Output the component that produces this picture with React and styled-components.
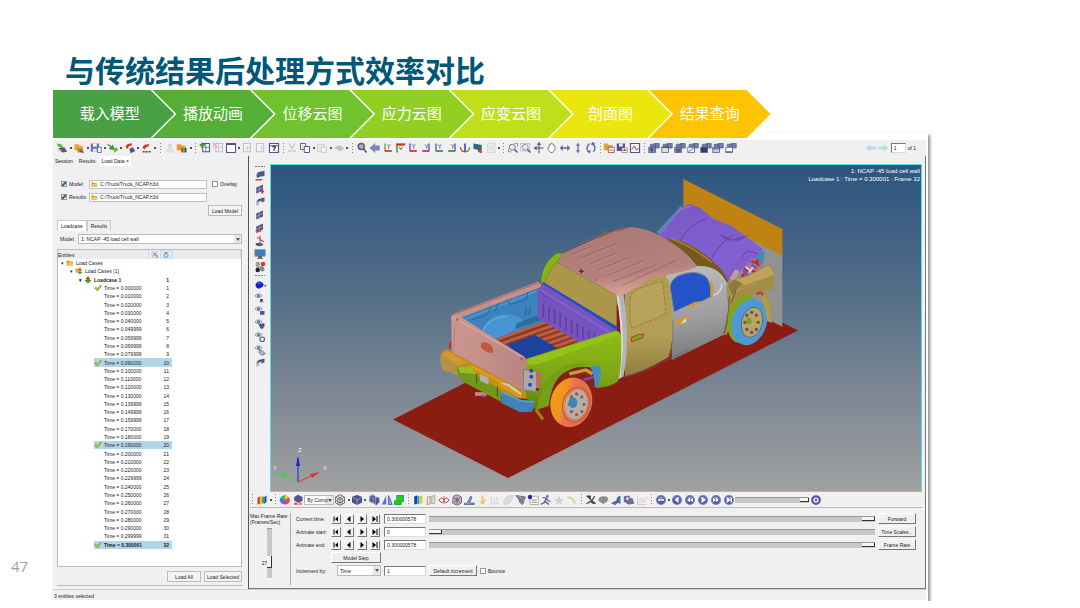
import styled, { createGlobalStyle } from 'styled-components';

const GlobalStyle = createGlobalStyle`
    *{
        box-sizing: border-box;
    }

    body{
        margin: 0;
        background: #fff;
        color: #222;
        font-family: "Liberation Sans", Arial, sans-serif;
    }

    button, input, select{
        margin: 0;
        padding: 0;
        font: inherit;
        color: inherit;
    }
`

// Slide
const Slide = styled.main`
    display: grid;
    grid-template-columns: 53px minmax(0, 1fr) 152px;
    padding-top: 50px;
`

const PageNumber = styled.span`
    align-self: end;
    padding: 0 0 25px 11px;
    font: 15px/20px "Open Sans", "Noto Sans", sans-serif;
    color: #a2a2a2;
`

const Title = styled.h1`
    margin: 0;
    padding: 0 0 2px 12px;
    font: 700 30px/38px "Noto Sans CJK SC", sans-serif;
    color: #005878;
    white-space: nowrap;
`

const Steps = styled.ol`
    position: relative;
    z-index: 1;
    display: flex;
    width: 82%;
    margin: 0;
    padding: 0 22px 0 0;
    list-style: none;
`

const Step = styled.li`
    flex: 1 1 120px;
    height: 48px;
    margin-right: -22px;
    padding: 0 ${({ $first }) => $first ? '8px' : '0'} 2px 0;
    display: flex;
    align-items: center;
    justify-content: center;
    background: ${({ $color }) => $color};
    clip-path: ${({ $first }) => $first
        ? 'polygon(0 0, calc(100% - 24px) 0, 100% 50%, calc(100% - 24px) 100%, 0 100%)'
        : 'polygon(0 0, calc(100% - 24px) 0, 100% 50%, calc(100% - 24px) 100%, 0 100%, 24px 50%)'};
    color: #fff;
    font: 15px/20px "Noto Sans CJK SC", sans-serif;
`

// Application window
const Window = styled.section`
    margin-top: -5px;
    border: solid #fff;
    border-width: 7px 2px 1px 0;
    background: #f0f0f0;
    box-shadow: 2px 2px 3px rgba(0, 0, 0, .45);
    font-size: 5px;
    line-height: 8px;
`

const TopBar = styled.header`
    display: flex;
    align-items: center;
    justify-content: space-between;
    height: 16px;
    padding: 0 10px 0 3px;
`

const Tools = styled.div`
    display: flex;
    align-items: center;
    flex: 0 1 ${({ $width }) => $width};
    min-width: 0;
`

const ToolButton = styled.button`
    display: flex;
    align-items: center;
    justify-content: center;
    flex: 0 1 13px;
    min-width: 0;
    height: 13px;
    border: 0;
    background: none;
    opacity: ${({ $faded }) => $faded ? .3 : 1};

    & svg{
        flex: none;
        width: 12px;
        height: 12px;
    }
`

const Caret = styled.i`
    flex: 0 1 4px;
    height: 2px;
    border: solid transparent;
    border-width: 0 1px;
    background: #555;
    background-clip: padding-box;
`

const Grip = styled.i`
    flex: 0 1 6px;
    height: 11px;
    background: repeating-linear-gradient(#888 0 1px, transparent 1px 3px) center / 1px 100% no-repeat;
`

const PageBox = styled.div`
    display: flex;
    align-items: center;

    & label{
        display: flex;
        align-items: center;
        gap: 2px;
        padding-left: 1px;
    }
`

const Body = styled.div`
    display: flex;
    border-right: 1px solid #777;
`

// Left panel
const Side = styled.aside`
    flex: 0 0 195px;
    display: flex;
    flex-direction: column;
`

const Tabs = styled.div`
    display: flex;
    height: ${({ $height }) => $height};
    padding-left: ${({ $inset }) => $inset};
    gap: ${({ $gap }) => $gap || '0'};
`

const Tab = styled.button`
    padding: 0 ${({ $boxed }) => $boxed ? '3px' : '2px'};
    border: ${({ $boxed }) => $boxed ? '1px solid #c8ccd0' : '0'};
    border-bottom: 0;
    background: ${({ $active }) => $active ? '#fff' : 'transparent'};
    white-space: nowrap;
    line-height: 8px;
`

const Form = styled.div`
    display: grid;
    grid-template-columns: 28px 118px 1fr;
    align-items: center;
    row-gap: 3px;
    padding: 13px 6px 4px 8px;
`

const CheckLabel = styled.label`
    display: flex;
    align-items: center;
    gap: 2px;
    height: 10px;
    padding-left: ${({ $inset }) => $inset || '0'};
`

const Check = styled.input`
    appearance: none;
    width: 6px;
    height: 6px;
    border: 1px solid #8a9aa8;
    background: #fff;

    &:checked{
        background: linear-gradient(135deg, #d6ecf8 30%, #2d6e9c 30% 70%, #d6ecf8 70%);
    }
`

const FileField = styled.div`
    display: flex;
    align-items: center;
    gap: 2px;
    height: 9px;
    padding-left: 1px;
    border: 1px solid #b9c2cb;
    background: #fff;

    & svg{
        flex: none;
        width: 7px;
        height: 7px;
    }
`

const TextInput = styled.input`
    flex: 1;
    min-width: 0;
    width: ${({ $width }) => $width || '100%'};
    height: ${({ $bare }) => $bare ? '7px' : '10px'};
    padding-left: ${({ $bare }) => $bare ? '0' : '2px'};
    border: ${({ $bare }) => $bare ? '0' : '1px solid'};
    border-color: #777 #ddd #ddd #777;
    background: #fff;
    outline: 0;
`

const FormButton = styled.button`
    height: 11px;
    padding: 0 2px;
    border: 1px solid #b5bec7;
    background: #f3f4f5;
    white-space: nowrap;
    line-height: 8px;
    min-width: 34px;
`

const RightCell = styled.div`
    grid-column: 1 / -1;
    display: flex;
    justify-content: flex-end;
`

const SelectRow = styled.label`
    display: flex;
    align-items: center;
    gap: 3px;
    padding: 3px 6px 5px 7px;
`

const SelectBox = styled.span`
    position: relative;
    display: flex;
    flex: 1;
    height: ${({ $tall }) => $tall ? '11px' : '10px'};
    margin-left: ${({ $inset }) => $inset || '0'};

    &::after{
        content: "";
        position: absolute;
        right: 2px;
        top: 4px;
        border: solid transparent;
        border-width: 3px 2px 0;
        border-top-color: #555;
        pointer-events: none;
    }
`

const Select = styled.select`
    appearance: none;
    width: 100%;
    padding-left: 2px;
    border: 1px solid #b4bcc4;
    border-radius: 0;
    background: linear-gradient(#e4e6e8, #e4e6e8) right / 7px 100% no-repeat #fff;
`

const Tree = styled.div`
    min-height: 318px;
    margin: 0 6px 0 4px;
    border: 1px solid #b4bcc4;
    background: #fff;
`

const TreeTable = styled.table`
    width: 100%;
    height: 299px;
    table-layout: fixed;
    border-collapse: collapse;

    & th, & td{
        padding: 0;
        line-height: 8px;
        text-align: left;
        white-space: nowrap;
    }

    & thead th{
        height: 9px;
        background: #ececee;
        border-right: 1px solid #d5d9dd;
        font-weight: 400;
    }

    & thead th:nth-child(3){
        background: #d5eaf6;
    }

    & svg{
        flex: none;
        width: 8px;
        height: 8px;
    }
`

const Col = styled.col`
    width: ${({ $width }) => $width};
`

const NameCell = styled.td`
    && {
        padding-left: ${({ $indent }) => $indent};
        background: ${({ $active }) => $active ? '#b3d5e9' : 'none'};
        background-clip: content-box;
        font-weight: ${({ $bold }) => $bold ? 700 : 400};
    }
`

const CountCell = styled.td`
    && {
        padding-right: 3px;
        text-align: right;
        background: ${({ $active }) => $active ? '#b3d5e9' : 'none'};
        font-weight: ${({ $bold }) => $bold ? 700 : 400};
    }
`

const NodeLabel = styled.span`
    display: flex;
    align-items: center;
    gap: 2px;
    height: 8px;
    padding-left: ${({ $inset }) => $inset || '0'};
`

const SideActions = styled.div`
    display: flex;
    justify-content: flex-end;
    gap: 3px;
    margin: 4px 5px 3px 4px;
    padding: 0 1px 3px 0;
    border-bottom: 1px solid #b4bcc4;
`

const StatusBar = styled.footer`
    height: 11px;
    padding: 2px 1px 0;
    border-top: 1px solid #d0d0d0;
`

// Right side
const Main = styled.div`
    flex: 1;
    min-width: 0;
    display: flex;
    flex-direction: column;
    border-left: 1px solid #555;
    border-bottom: 1px solid #777;
    padding: 8px 3px 0 1px;
`

const Stage = styled.div`
    flex: 1;
    display: flex;
    min-height: 0;
`

const Rail = styled.div`
    flex: 0 0 20px;
    display: flex;
    flex-direction: column;
    align-items: center;
`

const RailGrip = styled.i`
    width: 10px;
    height: 5px;
    background: repeating-linear-gradient(90deg, #777 0 2px, transparent 2px 3px) center / 100% 1px no-repeat;
`

const Viewport = styled.figure`
    position: relative;
    flex: 1;
    min-width: 0;
    margin: 0;
    border: 1px solid #4fe0e4;
    background: linear-gradient(#2c5580, #526d87 38%, #7f8995 72%, #a0a1a0);

    & > svg{
        position: absolute;
        width: 100%;
        height: 100%;
    }
`

const Caption = styled.figcaption`
    position: absolute;
    top: 2px;
    right: 1px;
    color: #fff;
    font-size: 6px;
    line-height: 8px;
    text-align: right;
`

const BottomBar = styled.div`
    display: flex;
    align-items: center;
    height: 16px;
    border-bottom: 1px solid #bbb;
`

const Component = styled.span`
    flex: 0 1 30px;
    display: flex;
`

const Player = styled.div`
    display: flex;
    height: 80px;
    padding: 5px 0 3px;
`

const RateLabel = styled.label`
    flex: 0 0 41px;
    display: flex;
    flex-direction: column;
    border-right: 1px solid #aaa;
    line-height: 6px;
    white-space: nowrap;
`

const RateRow = styled.span`
    display: flex;
    align-items: center;
    justify-content: center;
    padding: 3px 6px 0 0;

    & output{
        padding-top: 20px;
    }
`

const Range = styled.input`
    appearance: none;
    flex: 1;
    min-width: 0;
    width: 100%;
    height: 6px;
    border-top: 1px solid #999;
    background: #c8c8c8;

    &::-webkit-slider-thumb{
        appearance: none;
        width: ${({ $small }) => $small ? '9px' : '13px'};
        height: 4px;
        border: solid #333;
        border-width: 0 1px 1px 0;
        background: #f4f4f4;
    }
`

const RateRange = styled(Range)`
    flex: none;
    width: 5px;
    height: 50px;
    writing-mode: vertical-lr;
    direction: rtl;

    &::-webkit-slider-thumb{
        width: 5px;
        height: 12px;
    }
`

const Controls = styled.div`
    flex: 1;
    min-width: 0;
    display: grid;
    grid-template-columns: 32px 50px 42px minmax(0, 1fr) 38px;
    grid-auto-rows: 11px;
    align-content: start;
    align-items: center;
    gap: 2px 3px;
    padding: 0 6px 0 5px;
    white-space: nowrap;
`

const Frames = styled.div`
    display: flex;
    gap: 3px;
`

const Raised = styled.button`
    height: ${({ $small }) => $small ? '10px' : '11px'};
    width: ${({ $small }) => $small ? '10px' : 'auto'};
    padding: 0;
    border: 1px solid;
    border-color: #fff #777 #777 #fff;
    background: #f0f0f0;
    line-height: 8px;

    & svg{
        display: block;
        width: 8px;
        height: 8px;
    }
`

const Extra = styled.div`
    display: flex;
    align-items: center;
    gap: 3px;

    & > button{
        width: 48px;
    }
`

const navy = '#51558f'
const red = '#d8342c'
const green = '#3a9f2b'

const Axes = ({ a, b, left }) => (
    <>
        <path d={left ? 'M12 2v10H3' : 'M4 2v10h9'} fill="none" stroke={a} strokeWidth="1.6" />
        <path d={left ? 'M3 12h9' : 'M4 12h9'} stroke={b} strokeWidth="2" />
        <path d="M7 3l2 3 2-3M9 6v3" fill="none" stroke={navy} />
    </>
)

const Page = ({ x = 2 }) => <path d={`M${x} 2h9v11H${x}z`} fill="#fff" stroke={navy} strokeWidth="1.4" />

const Eye = ({ children }) => (
    <>
        <path d="M1 5q5-5 10 0-5 5-10 0z" fill="#dde5ed" stroke="#78818a" />
        <circle cx="6" cy="5" r="2" fill="#4a78a0" />
        {children}
    </>
)

const Ball = ({ d }) => (
    <>
        <circle cx="8" cy="8" r="6" fill="#5558a4" stroke="#8083bd" strokeWidth="1.5" />
        <path d="M4 6q4-5 8 0z" fill="#a4a8dc" />
        <path d={d} fill="#fff" />
    </>
)

const Mesh = ({ mark }) => (
    <>
        <path d="M3 6l9-4v8l-9 4z" fill={navy} />
        <path d="M3 10l9-4M7 4v9" stroke="#9ba1cf" />
        {mark}
    </>
)

const Panes = ({ d, fill }) => (
    <>
        <path d="M3 3h7v6H3zM8 2h7v6H8z" fill="#777bb0" stroke="#585c90" />
        <path d="M1 7h9v7H1z" fill={fill || '#ddd'} stroke={navy} />
        <path d={d} stroke="#333" fill="none" />
    </>
)

const icons = {
    model: <><path d="M1 2l6 1 3 5-7-2z" fill="#5eb22c" /><path d="M3 8l5 6 7-1-4-6z" fill={navy} /><path d="M2 12l3-3 3 3z" fill="#e2b72f" /></>,
    open: <><path d="M2 3h5l2 2h4v6H2z" fill="#e9a52e" /><path d="M6 8l8 1-2 5H6z" fill="#bc8b2f" /><path d="M9 11l5 3" stroke={navy} strokeWidth="2" /></>,
    save: <><path d="M1 2h11v11H1z" fill="#7075b1" /><path d="M4 2h5v4H4z" fill="#fff" /><path d="M4 9h5v4H4z" fill="#dfe2f3" /><path d="M10 7h5v7h-5z" fill="#eee" stroke={navy} /></>,
    import: <><path d="M1 3l6 4V4l3 6-7-1 2-2z" fill={green} stroke="#257b22" /><path d="M8 9l5-2 2 4-5 3z" fill="#6cb944" /></>,
    export: <><path d="M2 7q1-6 9-5l-1 3q-4-1-5 4z" fill={red} /><path d="M7 9l5-2 3 5-6 3z" fill={navy} /></>,
    share: <><path d="M2 8q1-6 9-5l-1 3q-4 0-5 4z" fill={red} /><path d="M2 13h12" stroke="#a23a34" strokeWidth="2" strokeDasharray="3 1" /></>,
    user: <><circle cx="8" cy="5" r="3" fill="#b5a891" /><path d="M3 14q0-6 5-6t5 6z" fill="#b1bb9c" /></>,
    palette: <><path d="M1 3h5l2 2h5v6H1z" fill="#e3a12a" /><path d="M7 8h3v6H7z" fill="#d32" /><path d="M10 8h2v6h-2z" fill="#3b3" /><path d="M12 8h2v6h-2z" fill="#24d" /></>,
    addPage: <><Page x={5} /><path d="M9 2v11M5 7h9" stroke={navy} /><path d="M4 1v7M1 4h7" stroke={green} strokeWidth="2.4" /></>,
    delPage: <><Page x={5} /><path d="M9 2v11M5 7h9" stroke={navy} /><path d="M1 1l6 6M7 1L1 7" stroke={red} strokeWidth="2" /></>,
    window: <><path d="M2 2h12v12H2z" fill="#fff" stroke={navy} strokeWidth="1.4" /><path d="M2 3h12" stroke={navy} strokeWidth="2" /></>,
    swap: <><Page /><path d="M4 8h6M7 5v6" stroke={navy} /></>,
    expand: <><Page /><path d="M8 5v6M10 8h4" stroke={navy} /></>,
    help: <><path d="M2 2h12v12H2zM2 5h12" fill="#fff" stroke={navy} strokeWidth="1.6" /><path d="M6 7q2-3 4 0l-2 2v3" fill="none" stroke="#333" strokeWidth="1.5" /></>,
    cut: <path d="M4 2l5 8M12 2L7 10M3 12h4M9 12h4" stroke={navy} strokeWidth="1.7" />,
    copy: <><path d="M2 2h7v8H2z" fill="#eee" stroke="#666" strokeWidth="1.3" /><path d="M7 6h7v8H7z" fill="#fff" stroke={navy} strokeWidth="1.3" /></>,
    paste: <><path d="M2 3h9v10H2z" fill="#ddd" stroke={navy} /><path d="M7 7h7v7H7z" fill="#fff" stroke={navy} /></>,
    cloud: <path d="M1 9l4-4h6l4 4-5 3H7l-2-3z" fill={navy} />,
    zoom: <><circle cx="7" cy="6" r="4" fill="#a9b1c8" stroke="#5a6080" strokeWidth="2" /><path d="M10 9l4 5" stroke="#555" strokeWidth="2" /></>,
    back: <path d="M1 8l7-6v3h6v6H8v3z" fill="#7c83bd" stroke="#9399c8" />,
    xy: <Axes a={green} b={red} />,
    top: <><path d="M4 14V4h10" fill="none" stroke={green} strokeWidth="2" /><path d="M3 3h12" stroke={red} strokeWidth="2.4" /><path d="M7 7l2 3 2-3" fill="none" stroke="#333" /></>,
    xz: <Axes a="#4145c8" b={red} />,
    zx: <Axes a="#4145c8" b={red} left />,
    yz: <Axes a="#4145c8" b={green} />,
    zy: <Axes a="#4145c8" b={green} left />,
    iso: <><path d="M8 2v10" stroke="#3238cf" strokeWidth="2" /><path d="M2 7q0 6 6 6" fill="none" stroke={red} strokeWidth="1.7" /><path d="M14 7q0 6-6 6" fill="none" stroke={green} strokeWidth="1.7" /></>,
    screen: <><path d="M2 2l11 2v8L2 9z" fill="#31658b" /><path d="M8 10l6 3-2 2-4-2z" fill={red} /></>,
    views: <><path d="M3 2h10v12H3z" fill="#dde8df" stroke="#888" /><path d="M5 5h6v5H5z" fill="#abc" /></>,
    fit: <><path d="M2 13V9M2 13h4M10 2h4v4" fill="none" stroke="#777" /><circle cx="7" cy="7" r="4" fill="#e6eaf2" stroke={navy} /><path d="M10 10l4 4" stroke="#555" strokeWidth="2" /></>,
    zoomBox: <><path d="M1 2h12v10H1z" fill="none" stroke="#999" strokeDasharray="2 1" /><circle cx="7" cy="7" r="4" fill="#e6eaf2" stroke="#777" /><path d="M10 10l4 4" stroke={navy} strokeWidth="2" /></>,
    move: <path d="M8 1v14M2 8h12M6 4l2-3 2 3M5 6L2 8l3 2" fill="none" stroke={navy} strokeWidth="1.5" />,
    hand: <path d="M4 8V4q1-1 2 0V2q1-1 2 0v1q1-1 2 0v2q2-1 2 1v4l-3 4H6L2 9q0-2 2-1z" fill="#fff" stroke="#777" strokeWidth="1.2" />,
    horizontal: <path d="M1 8l4-4v3h6V4l4 4-4 4V9H5v3z" fill="#6066af" />,
    vertical: <path d="M8 1l3 4H9v6h2l-3 4-3-4h2V5H5z" fill="#7277bd" />,
    rotate: <path d="M6 2Q0 8 5 13M10 2q6 6 1 11M3 12l3 2 1-3M9 4l1-3 3 2" fill="none" stroke="#6267ac" strokeWidth="1.8" />,
    folderPic: <><path d="M1 2h5l2 2h5v7H1z" fill="#dba33b" /><path d="M7 7h8v7H7z" fill="#fff" stroke="#a33" /><path d="M8 12l2-2 4 2" stroke={red} fill="none" /></>,
    savePic: <><path d="M1 2h11v10H1z" fill={navy} /><path d="M4 2h5v4H4z" fill="#eee" /><path d="M8 8h7v6H8z" fill="#fff" stroke="#977" /><path d="M9 12l2-2 3 1" stroke={red} /></>,
    plot: <><path d="M2 2h12v12H2z" fill="#fff" stroke={navy} strokeWidth="1.6" /><path d="M4 10l3-5 3 6 3-3" fill="none" stroke={red} strokeWidth="1.3" /></>,
    p1: <Panes d="M3 10h4M5 8v5" fill="#7b80bb" />,
    p2: <Panes d="M1 7h9" />,
    p3: <Panes d="M3 10h6M3 12h6" fill="#888" />,
    p4: <Panes d="M2 13l7-5" fill="#fff" />,
    p5: <Panes d="M3 9h5v3H3z" fill="#35407d" />,
    p6: <Panes d="M1 9h9" fill="#c8cadd" />,
    p7: <Panes d="M1 13h9" fill="#fff" />,
    prev: <path d="M1 8l6-5v3h8v4H7v3z" fill="#b9dde6" />,
    next: <path d="M15 8L9 3v3H1v4h8v3z" fill="#b9dde6" />,
    m1: <><path d="M3 8l2-5 9-2v7l-7 1-2 2z" fill={navy} /><path d="M2 13h9" stroke={red} strokeWidth="1.8" /></>,
    m2: <Mesh mark={<path d="M8 10h6l-3 5z" fill={red} />} />,
    m3: <><path d="M3 8l3-4 8-2v5l-4 2V6L6 8v4z" fill={navy} /><path d="M3 8v5l3-1V7z" fill="#b5b8cc" /></>,
    m4: <Mesh />,
    m5: <Mesh mark={<path d="M2 12l10-3M3 14l7-2" stroke={red} strokeWidth="1.2" />} />,
    m6: <><path d="M8 1v8M8 6l5 3M4 4h5" stroke={red} strokeWidth="1.4" fill="none" /><path d="M2 11l7-1 4 3-5 2-5-1z" fill="#44598c" /></>,
    monitor: <><path d="M1 2h14v9H1z" fill="#3980bd" stroke="#999" /><path d="M6 11h4v2H6zM4 14h8" fill="#555" stroke="#555" /></>,
    balls: <><circle cx="5" cy="4" r="3" fill="#999" /><circle cx="12" cy="4" r="3" fill={red} /><circle cx="5" cy="12" r="3" fill="#222" /><circle cx="11" cy="11" r="3" fill="#888" /><path d="M3 8h9" stroke="#333" /></>,
    blue: <><path d="M2 8q0-3 5-5 5 1 6 5-1 3-6 5-5-1-5-5z" fill="#1420d4" /><path d="M4 6q3-3 6 0z" fill="#828af2" /><path d="M14 9h2" stroke="#444" strokeWidth="2" /></>,
    e1: <Eye><path d="M9 10l4 4M9 14v-4h3" stroke="#333" /></Eye>,
    e2: <Eye><path d="M8 8h6v5H8z" fill={navy} /></Eye>,
    e3: <Eye><path d="M6 8l8-1v4l-3 4-3-2z" fill={navy} /></Eye>,
    e4: <Eye><circle cx="11" cy="11" r="3" fill="#fff" stroke={navy} strokeWidth="1.5" /></Eye>,
    e5: <Eye><path d="M7 8l4 1 4 4-4 2-4-3z" fill="#b5b8cc" stroke={navy} /></Eye>,
    contour: <><path d="M2 5l4-2v10l-4 1z" fill="#df3a25" /><path d="M5 4l3-1v10l-3 1z" fill="#e8c72a" /><path d="M8 3l3 1v9l-3-1z" fill="#37b432" /><path d="M11 4l3-2v9l-3 2z" fill="#2742d6" /></>,
    wheel: <><circle cx="8" cy="8" r="6" fill="#e42ad2" /><path d="M8 8V2a6 6 0 0 1 5 3z" fill="#f1ce22" /><path d="M8 8l5-3a6 6 0 0 1-1 8z" fill="#f04a2b" /><path d="M8 8l-4 5a6 6 0 0 1-2-8z" fill="#2485f2" /><path d="M8 8L2 5a6 6 0 0 1 6-3z" fill="#2cc953" /></>,
    colorCube: <><path d="M3 4l5-3 6 3v5l-5 3-6-3z" fill={navy} /><path d="M3 13h10" stroke="#e83ac8" strokeWidth="3" /><path d="M7 13h4" stroke="#e7cf24" strokeWidth="3" /></>,
    wire: <path d="M8 1l6 3v8l-6 3-6-3V4zM2 4l6 4 6-4M8 8v7M5 3l6 4v7M11 3L5 7v7M2 8l6 4 6-4" fill="none" stroke="#555" />,
    solid: <><path d="M8 2l6 2v7l-6 3-6-3V4z" fill={navy} stroke="#303362" /><path d="M2 4l6 4 6-4M8 8v6" fill="none" stroke="#aab0dc" /></>,
    blocks: <path d="M2 3l5-2 3 3 5 1v6l-4 4-4-3-5-2zM2 3l5 3v6M7 6l3-2M10 4v10" fill={navy} stroke="#9da3d0" />,
    mirror: <><path d="M7 2v12H1z" fill="#5a73cf" /><path d="M10 2v12h5z" fill="#8ea3de" stroke="#3a49a0" /></>,
    greenBox: <path d="M5 2h9v8h-3v4H2V9h3z" fill="#22ca25" stroke="#168d1a" />,
    band: <><path d="M3 3l4-1v11l-4 1z" fill="#163fb7" /><path d="M7 2l3 1v10l-3 1z" fill="#2fa1d9" /><path d="M10 3l4-1v10l-4 1z" fill="#d6d02f" /></>,
    strips: <><path d="M3 4l4-1v10l-4 1z" fill="#eadfe0" stroke="#bb7777" /><path d="M9 3l4-1v10l-4 1z" fill="#dce8d3" stroke="#79a875" /></>,
    vector: <path d="M1 8l4-3 3 3 3-3 4 3-4 4-3-3-3 3zM8 3v10" fill="none" stroke="#bd4646" strokeWidth="1.3" />,
    tensor: <><path d="M3 3l5-2 6 3v8l-6 3-6-3z" fill="#b3b5d0" stroke={navy} /><path d="M4 5l8 6M4 11l8-6M8 4v9" stroke="#a44" strokeWidth="1.3" /></>,
    iso2: <path d="M5 13l5-10 2 1-3 8h6v2H2v-2z" fill="#8f9cc6" stroke="#4e618c" />,
    tap: <path d="M7 2h3v6l4-1-5 8-5-6 3 1z" fill="#efc678" />,
    columns: <path d="M3 3v10M7 6v7M11 4v9M2 13h12" stroke="#a0b2d6" strokeWidth="2" />,
    shape: <path d="M3 8l4-5 8-1-3 8-6 4-4-1z" fill="#a1a4b6" stroke="#818598" />,
    section: <><path d="M1 2l13 2-4 10-3-2-2-5z" fill="#94a2b5" stroke={navy} /><path d="M3 4l9 8M12 4L6 10" stroke="#40443b" /></>,
    note: <><path d="M4 3h11v11H4z" fill="#fff" stroke="#999" /><path d="M6 8h7M6 11h7" stroke="#666" /><circle cx="4" cy="4" r="3" fill="#2430a5" /></>,
    runner: <><circle cx="10" cy="3" r="2" fill="#7780bb" /><path d="M3 5h5l3 4 3 1M8 6l-2 5-5 3M7 10l5 4" fill="none" stroke="#505a88" strokeWidth="1.6" /></>,
    jet: <path d="M1 8l5-1 2-5 2 5 5 1-4 2v5l-3-3-4 2 1-4z" fill="#7e8fa5" />,
    curve: <path d="M2 3q11 0 11 11h-3Q9 6 2 6z" fill="#9db82c" />,
    track: <path d="M2 3h5v2H5l4 4 4-6M2 13l5-3 5 3M9 9l5 4" fill="none" stroke="#3d4454" strokeWidth="1.8" />,
    blob: <path d="M2 7q1-4 7-4 6 0 6 4-1 4-5 5l-2 2-1-2q-5-1-5-5z" fill="#8c8c8c" />,
    wave: <path d="M1 12l7-3 2-5 4-2v11l-4-1-3 3z" fill="#4b70a0" />,
    camera: <><path d="M1 3l8-1v3l4 1 2 7-8 1-6-4z" fill="#6c6f9c" /><circle cx="6" cy="6" r="2" fill="#ddd" /></>,
    graph: <path d="M2 2v12h12M3 8l4-2 4 3 4-5M3 12l4-2 6 1" fill="none" stroke="#bf7171" strokeWidth="1.3" />,
    loop: <Ball d="M4 7h8v2H4z" />,
    first: <Ball d="M10 4v8L5 8z" />,
    rewind: <Ball d="M8 5v6L4 8zM12 5v6L8 8z" />,
    play: <Ball d="M6 4l6 4-6 4z" />,
    forward: <Ball d="M4 5l4 3-4 3zM8 5l4 3-4 3z" />,
    last: <Ball d="M5 4l5 4-5 4zM10 5h2v6h-2z" />,
    gear: <><circle cx="8" cy="8" r="5" fill="#eef" stroke="#5558a4" strokeWidth="3" /><circle cx="8" cy="8" r="1.6" fill="#5558a4" /></>,
    folder: <><path d="M1 3h5l2 2h6v8H1z" fill="#d99c2b" /><path d="M4 7h11l-2 6H1z" fill="#f3c55e" /></>,
    loads: <><path d="M1 3h6l2 2h4v6H1z" fill="#e3a736" /><path d="M10 1v6M7 4l3 3 3-3" stroke={red} strokeWidth="2" fill="none" /><path d="M5 10h10l-5 5z" fill={green} /></>,
    load: <><path d="M8 1v6M5 4l3 4 3-4" stroke={red} strokeWidth="3" fill="none" /><path d="M1 9l7-3 7 3-7 6z" fill={green} /></>,
    tick: <path d="M1 9l3-3 3 3 6-7 2 2-7 9H6z" fill="#a8c63a" stroke="#718f24" />,
    info: <><path d="M2 2h10v10H2z" fill="#e3e7f2" stroke="#9aa" /><path d="M5 10l2-6 3 6M11 8l3 6" fill="none" stroke={navy} strokeWidth="1.3" /></>,
    ring: <><circle cx="8" cy="9" r="4" fill="#cce9f1" stroke="#577d91" strokeWidth="1.5" /><path d="M5 3h6" stroke="#577d91" strokeWidth="1.5" /></>,
    frameFirst: <path d="M3 3h2v10H3zM12 3v10L6 8z" />,
    frameBack: <path d="M11 2v12L4 8z" />,
    frameNext: <path d="M5 2v12l7-6z" />,
    frameLast: <path d="M3 2v12l7-6zM11 2h2v12h-2z" />,
}

const Icon = ({ name }) => <svg viewBox="0 0 16 16" aria-hidden="true">{icons[name]}</svg>

// '.' is a drop-down caret, '|' a grip, a leading '-' a disabled tool
const ToolList = ({ items }) => items.split(' ').map((item, i) => {
    if (item === '.') return <Caret key={i} />
    if (item === '|') return <Grip key={i} />

    const name = item.replace('-', '')
    return (
        <ToolButton key={i} type="button" aria-label={name} $faded={item !== name}>
            <Icon name={name} />
        </ToolButton>
    )
})

const topTools = 'model . open . save . import . export . share . | -user palette . | addPage -delPage window . -swap -expand help | -cut copy . -paste . -cloud . | zoom back xy top xz zx yz zy iso screen -views . | fit zoomBox move hand horizontal vertical rotate | folderPic savePic plot | p1 p2 p3 p4 p5 p6 p7'

const steps = [
    ['载入模型', '#48a142'],
    ['播放动画', '#55af36'],
    ['位移云图', '#70c22e'],
    ['应力云图', '#91cf23'],
    ['应变云图', '#bedf1a'],
    ['剖面图', '#ebe70e'],
    ['结果查询', '#ffc400'],
]

const times = [
    '0.000000', '0.010000', '0.020000', '0.030000', '0.040000', '0.049999', '0.059999', '0.069999',
    '0.079999', '0.090000', '0.100000', '0.110000', '0.120000', '0.130000', '0.139999', '0.149999',
    '0.159999', '0.170000', '0.180000', '0.190000', '0.200000', '0.210000', '0.220000', '0.229999',
    '0.240000', '0.250000', '0.260000', '0.270000', '0.280000', '0.290000', '0.299999', '0.300001',
]

const Lugs = ({ cx, cy, rx, ry, color }) => [0, 1, 2, 3, 4, 5, 6, 7].map((n) => (
    <circle
        key={n}
        cx={cx + rx * Math.cos(n * Math.PI / 4)}
        cy={cy + ry * Math.sin(n * Math.PI / 4)}
        r="5"
        fill={color}
    />
))

const Truck = () => (
    <svg viewBox="271 165 650 326" preserveAspectRatio="xMidYMid meet" role="img" aria-label="Truck">
        <defs>
            <linearGradient id="roof" x1="0" y1="0" x2=".3" y2="1">
                <stop offset="0" stopColor="#a87873" />
                <stop offset=".75" stopColor="#b5817c" />
                <stop offset="1" stopColor="#dc9f99" />
            </linearGradient>
            <linearGradient id="gate" x1="0" y1="0" x2="1" y2="0">
                <stop offset="0" stopColor="#cc9691" />
                <stop offset="1" stopColor="#ba8480" />
            </linearGradient>
            <linearGradient id="side" x1="0" y1="0" x2="0" y2="1">
                <stop offset="0" stopColor="#91bc18" />
                <stop offset=".6" stopColor="#7ca613" />
                <stop offset="1" stopColor="#5f820f" />
            </linearGradient>
            <linearGradient id="door" x1="0" y1="0" x2="0" y2="1">
                <stop offset="0" stopColor="#b09c4e" />
                <stop offset=".6" stopColor="#b39f55" />
                <stop offset="1" stopColor="#8f7d40" />
            </linearGradient>
            <linearGradient id="grayDoor" x1="0" y1="0" x2=".1" y2="1">
                <stop offset="0" stopColor="#bdbdbd" />
                <stop offset=".6" stopColor="#9d9d9d" />
                <stop offset="1" stopColor="#7c7c7c" />
            </linearGradient>
            <linearGradient id="hood" x1="0" y1="0" x2=".5" y2="1">
                <stop offset="0" stopColor="#765ac3" />
                <stop offset="1" stopColor="#8561d4" />
            </linearGradient>
            <linearGradient id="tyre" x1="0" y1="0" x2="1" y2="0">
                <stop offset="0" stopColor="#f09c15" />
                <stop offset=".3" stopColor="#ed9424" />
                <stop offset=".45" stopColor="#e9714f" />
                <stop offset="1" stopColor="#df704f" />
            </linearGradient>
            <clipPath id="floor">
                <path d="M345 506l155-54 105 64-165 48z" />
            </clipPath>
        </defs>

        <path d="M393 419.5L508 478 798 330.5 683 272z" fill="#8a1c12" />

        {/* cab, hood and front wheel */}
        <g transform="translate(600 170) scale(.3333)">
            <path d="M250 100L547 252V470L250 320z" fill="#929292" />
            <path d="M250 27L547 177V257L250 105z" fill="#bf8313" />
            <path d="M430 300l20-60 45 5-8 45-20 15z" fill="#3f8ebd" />
            <path d="M415 325l45-70 35 40-10 30-40 15z" fill="#a67880" />
            <path d="M420 300l12-12 10 18M442 270l30 10M450 300l20 8M425 320l12-12M470 268l6 20" stroke="#c12a25" strokeWidth="7" fill="none" />
            <path d="M435 290l15 10M460 290l-12 18M450 262l10-8" stroke="#d5ced9" strokeWidth="6" />
            <path d="M455 285l15 10M430 300l12 16" stroke="#7352bc" strokeWidth="7" />
            <path d="M172 186L240 110 250 108 180 193z" fill="#37aab3" />
            <path d="M176 190l62-76 34-12 32 14 36 30 52 20 96 70-12 18-86 78-50-30q-60-50-164-92z" fill="url(#hood)" />
            <path d="M238 218q30-60 85-72M332 272q20-50 68-76M385 318l55-75 34 8" fill="none" stroke="#593fa0" strokeWidth="2.5" />
            <path d="M355 190l40 18 52-14-30 18-40-2z" fill="#674bb5" />
            <path d="M182 190l58-72 34-10" fill="none" stroke="#9f82ea" strokeWidth="3" />
            <path d="M380 332l12-60 70-22-58 70z" fill="#815dc9" />
            <path d="M388 326l18-28 12 5-15 30z" fill="#c49ca0" />
            <path d="M200 205q70 5 140 70 35 28 48 65l-30-20-70-35z" fill="#76591d" />
            <path d="M212 206q60 20 125 72" fill="none" stroke="#b3831f" strokeWidth="4" />
            <path d="M195 315L290 288q60-4 90 50l14 52-8 50-16 55-155 75 2-110z" fill="url(#grayDoor)" />
            <path d="M295 290q70-5 90 65l10 35-8 50q0-70-15-98-20-45-77-52z" fill="#b7b7b7" />
            <path d="M210 350q2-20 25-33 50-20 80 1 18 12 18 62l-28 14q-45 10-83 32z" fill="#2354c9" stroke="#84868d" strokeWidth="3" />
            <path d="M332 325l8 20v30l-8 8z" fill="#d49a26" />
            <path d="M263 408l20-12 20-2-3 7-38 13z" fill="#d89725" />
            <path d="M340 376q28-10 25-35" fill="none" stroke="#d5d5d5" strokeWidth="5" />
            <path d="M75 365L120 330 190 312l16 20 12 100q5 80-13 130-65 40-130 57z" fill="url(#door)" />
            <path d="M90 390q0-20 22-32l62-22q12-3 15 8l9 85-20 12-80 32q-7-10-8-25z" fill="#b8a35b" stroke="#7e7038" strokeWidth="2" strokeDasharray="12 4" />
            <path d="M94 502l20-8 18-2-5 12-32 12z" fill="#79a41b" stroke="#be3526" strokeWidth="3" />
            <path d="M227 458l14-13 26-5-3 9-25 14-12 2z" fill="#df971f" />
            <path d="M242 462l18-7-4-12z" fill="#d5d5cf" />
            <path d="M218 450q5 70-10 110M382 430q0 30-14 63" fill="none" stroke="#6f6f68" strokeWidth="2" />
            <path d="M48 370l20-12q14 80 13 150-1 70-11 112l-17 8 10-80q5-80-15-178z" fill="#b5b5b5" />
            <path d="M52 375q15 80 14 165l-9 85" fill="none" stroke="#dbdbdb" strokeWidth="6" />
            <path d="M75 620q70-15 135-55l60-28" fill="none" stroke="#596375" strokeWidth="2" />
            {/* fender */}
            <path d="M378 345l25-18 35-7 70-38 16 26-2 48-70 18q-50 30-52 75l-20 45-12 2 20-50z" fill="#a38d47" />
            <path d="M400 330l38-8 70-36 15 28-88 32z" fill="#bea558" />
            <path d="M382 345l20-18 28 12-35 40zM405 365l35-15 30-8" fill="#8d7939" stroke="#c2ab5e" strokeWidth="2" />
            <path d="M388 380q-3 70-15 112M393 400l15-40" stroke="#6f5d29" strokeWidth="3" fill="none" />
            <path d="M482 365l14 2 15 25 4 66-14-6-10-50z" fill="#ab9448" />
            <path d="M485 370l8 8M470 372l14-6" stroke="#c33124" strokeWidth="7" />
            {/* front wheel */}
            <ellipse cx="430" cy="447" rx="46" ry="73" transform="rotate(14 430 447)" fill="#7da51e" />
            <ellipse cx="448" cy="456" rx="52" ry="71" transform="rotate(17 448 456)" fill="#4f99d3" />
            <ellipse cx="456" cy="457" rx="31" ry="46" transform="rotate(15 456 457)" fill="#b9a65b" stroke="#2b5e8c" strokeWidth="2" />
            <Lugs cx={455} cy={457} rx={20} ry={30} color="#66488f" />
            <ellipse cx="447" cy="453" rx="8" ry="10" fill="#7ba326" />
            <path d="M493 370q18 24 22 88l-13-4q-6-48-20-70z" fill="#b29b50" />
        </g>

        {/* bed, tailgate and rear wheel */}
        <g transform="translate(380 170) scale(.3333)">
            <path d="M530 255l150-70 75-14q60 5 110 42 55 30 87 77-50 20-132 32l-100 58L530 277z" fill="url(#roof)" />
            <path d="M545 250l110-50 45-20" fill="none" stroke="#3c4565" strokeWidth="3" />
            <path d="M655 203l50-20 30-6" fill="none" stroke="#b4583f" strokeWidth="4" />
            <path d="M575 255l65-28M600 265l110-44M630 282l80-33M655 300l95-38M680 318l110-45M700 334l130-50M730 345l160-75" stroke="#8d5f5b" strokeWidth="2" />
            <path d="M577 258l65-28M602 268l110-44M632 285l80-33M657 303l95-38M682 321l110-45" stroke="#c7928c" strokeWidth="2" />
            <path d="M604 297v14M597 304h14" stroke="#8a1714" strokeWidth="4" />
            <circle cx="646" cy="330" r="3" fill="#c1503f" />
            <path d="M528 276l182 100v96L490 338q8-35 38-62z" fill="#ab9649" />
            <path d="M483 338q2-60 48-88l15-2-8 20q-35 35-44 72z" fill="#83b519" stroke="#48710f" />
            <path d="M490 336l222 134v15l-20-6-205-126z" fill="#2150bd" />
            <path d="M237 440l240-92 8 110-140 50z" fill="#3c83be" />
            <path d="M245 452l225-88" stroke="#4f9ccb" strokeWidth="4" />
            <path d="M305 485q20-55 85-52 35 4 45 35l-90 40z" fill="#4894d2" />
            <path d="M310 480q20-40 72-40" fill="none" stroke="#66aede" strokeWidth="4" />
            <path d="M275 450l45-15 20-35 35-12 20 15 45-16 5-30M360 390l-15 35M440 412l-5 28M452 408l-5 28" fill="none" stroke="#27648f" strokeWidth="3" />
            <path d="M410 460l75-28v18l-80 28z" fill="#2e6c9c" />
            <g clipPath="url(#floor)">
                <path d="M345 506l155-54 105 64-165 48z" fill="#853b28" />
                <path d="M340 512l170-60M358 523l170-60M376 533l170-60M394 543l170-60M412 553l170-60M430 563l170-60M448 573l170-60" stroke="#bd5e40" strokeWidth="9" />
            </g>
            <path d="M380 525l85-30 68 40-94 32z" fill="#1e439d" />
            <path d="M474 345l14-4 220 138-22 10-88 28-125-73z" fill="#7653be" />
            <path d="M478 358l210 128" stroke="#8460cb" strokeWidth="7" />
            <path d="M490 400v42M507 410v42M524 420v42M541 430v42M558 440v42M575 450v42M592 460v42M609 470v38M626 480v26M643 488v14" stroke="#61429f" strokeWidth="5" />
            <path d="M480 362l15 18 10-2" fill="none" stroke="#533791" strokeWidth="2" />
            <path d="M214 440l10-10 250-95 10 9-3 8-240 91z" fill="#c98f89" />
            <path d="M225 432l250-93" stroke="#8b5e5b" strokeWidth="2" />
            {/* loose parts under the bumper */}
            <path d="M285 672h35" stroke="#cc8784" strokeWidth="11" />
            <path d="M305 677l12 4" stroke="#694da8" strokeWidth="5" />
            <path d="M467 718l22 30" stroke="#a8801b" strokeWidth="9" />
            <path d="M540 625l100-50 40 10-10 60-60 15z" fill="#872219" />
            <path d="M568 612l50-12 20 12" stroke="#c49a42" strokeWidth="10" fill="none" />
            <path d="M610 630l35-10" stroke="#7651bc" strokeWidth="7" />
            {/* near side panel */}
            <path d="M440 566l265-84q15 0 18 15 4 95-9 137-22 18-64 20 12-54-20-62-55-10-95 30-35 30-45 86l-40 12q12-24-20-40l8-90z" fill="url(#side)" />
            <path d="M440 568l265-83 12 8-15 8-225 80-37 4z" fill="#92c317" />
            <path d="M536 622q-24 30-30 86l-38 12q20-70 33-92 60-62 130-45l-70 14z" fill="#759f14" />
            <path d="M630 590l25-4q10 10 8 32l-10 35-9-2q0-40-14-61z" fill="#468dc2" />
            {/* tailgate */}
            <path d="M214 438q10-8 30 4l196 124-4 98-8 18-205-115-8-14z" fill="url(#gate)" />
            <path d="M216 440l215 122" stroke="#d8a29c" strokeWidth="5" />
            <path d="M225 470l-5 80 202 108" fill="none" stroke="#a3736f" strokeWidth="2" />
            <path d="M303 522q4-10 22-2 18 10 14 28-18 4-36-16z" fill="#c1573e" />
            <circle cx="232" cy="449" r="4" fill="#d4543c" />
            <circle cx="425" cy="566" r="4" fill="#d4543c" />
            <path d="M208 515l6 2v22l-8-4z" fill="#c83129" />
            <path d="M431 598l48 8q7 30-7 60l-42-7z" fill="#aaa" stroke="#77706a" strokeWidth="2" />
            <path d="M468 604l12 2q2 30-4 48l-8-2z" fill="#cc6858" />
            <circle cx="454" cy="602" r="6" fill="#2b4dbb" />
            <circle cx="454" cy="620" r="6" fill="#2b4dbb" />
            <circle cx="450" cy="644" r="6" fill="#2b4dbb" />
            <circle cx="472" cy="658" r="5" fill="#80151c" />
            {/* bumper */}
            <path d="M184 545l14-8 240 130 2 20-76-10-170-90z" fill="#c58d18" />
            <path d="M182 552l52 34v32l-48-20q-8-18-4-46z" fill="#b09346" />
            <path d="M184 552l50 34 30-8-60-34z" fill="#d4992d" />
            <path d="M230 590l42-3 16 28 63 38 12 8v34l-114-60q-18-16-19-45z" fill="#739817" />
            <path d="M233 591l38-3 18 24-48-4z" fill="#96bf26" />
            <path d="M300 612l26 12v20l-26-12z" fill="#b1b1ac" />
            <path d="M290 612v28M352 650v30" stroke="#3d5117" strokeWidth="3" />
            <path d="M365 640l20 5 38 28" stroke="#d5ccbd" strokeWidth="7" fill="none" />
            <path d="M272 588l96 50M355 640l70 42" stroke="#da9b18" strokeWidth="9" />
            <path d="M364 665l60 24 40 4-8 32-36 2-56-28z" fill="#3e83b9" />
            <path d="M366 667l58 26 38 3" fill="none" stroke="#5aa4d0" strokeWidth="4" />
            {/* rear wheel */}
            <ellipse cx="574" cy="697" rx="62" ry="75" transform="rotate(15 574 697)" fill="url(#tyre)" />
            <ellipse cx="588" cy="704" rx="40" ry="53" transform="rotate(14 588 704)" fill="none" stroke="#b75b41" strokeWidth="3" />
            <ellipse cx="589" cy="703" rx="33" ry="45" transform="rotate(14 589 703)" fill="#b1afac" />
            <Lugs cx={590} cy={703} rx={22} ry={31} color="#a85344" />
            <ellipse cx="579" cy="698" rx="13" ry="16" fill="#4386b4" />
        </g>

        {/* axes */}
        <path d="M298 482v-24" stroke="#2022c9" />
        <path d="M296 466l2-10 2 10z" fill="#2022c9" />
        <path d="M298 482l-19-9" stroke="#39d448" />
        <path d="M277 472l10 2-2 4z" fill="#39d448" />
        <path d="M298 482l20-9" stroke="#de3535" />
        <path d="M320 472l-10 2 2 4z" fill="#de3535" />
        <g fill="#eee" fontSize="6" fontFamily="Liberation Sans, sans-serif">
            <text x="298" y="452">Z</text>
            <text x="273" y="470">Y</text>
            <text x="323" y="470">X</text>
        </g>
    </svg>
)

const SidePanel = () => (
    <Side>
        <Tabs $height="10px" $inset="0" $gap="2px">
            <Tab type="button">Session</Tab>
            <Tab type="button">Results</Tab>
            <Tab type="button" $active>Load Data ×</Tab>
        </Tabs>
        <Form>
            <CheckLabel><Check type="checkbox" defaultChecked />Model:</CheckLabel>
            <FileField>
                <Icon name="folder" />
                <TextInput $bare aria-label="Model file" defaultValue="C:/Truck/Truck_NCAP.h3d" />
            </FileField>
            <CheckLabel $inset="5px"><Check type="checkbox" />Overlay</CheckLabel>
            <CheckLabel><Check type="checkbox" defaultChecked />Results:</CheckLabel>
            <FileField>
                <Icon name="folder" />
                <TextInput $bare aria-label="Results file" defaultValue="C:/Truck/Truck_NCAP.h3d" />
            </FileField>
            <RightCell><FormButton type="button">Load Model</FormButton></RightCell>
        </Form>
        <Tabs $height="11px" $inset="4px">
            <Tab type="button" $boxed $active>Loadcase</Tab>
            <Tab type="button" $boxed>Results</Tab>
        </Tabs>
        <SelectRow>
            Model:
            <SelectBox>
                <Select><option>1: NCAP -45 load cell wall</option></Select>
            </SelectBox>
        </SelectRow>
        <Tree>
            <TreeTable>
                <colgroup>
                    <Col $width="90px" />
                    <Col $width="12px" />
                    <Col $width="12px" />
                    <Col />
                </colgroup>
                <thead>
                    <tr>
                        <th>Entities</th>
                        <th><NodeLabel $inset="2px"><Icon name="info" /></NodeLabel></th>
                        <th><NodeLabel $inset="1px"><Icon name="ring" /></NodeLabel></th>
                        <th />
                    </tr>
                </thead>
                <tbody>
                    <tr><NameCell $indent="3px"><NodeLabel>▾<Icon name="folder" />Load Cases</NodeLabel></NameCell></tr>
                    <tr><NameCell $indent="12px"><NodeLabel>▾<Icon name="loads" />Load Cases (1)</NodeLabel></NameCell></tr>
                    <tr>
                        <NameCell $indent="21px" $bold><NodeLabel>▾<Icon name="load" />Loadcase 1</NodeLabel></NameCell>
                        <td />
                        <CountCell $bold>1</CountCell>
                    </tr>
                    {times.map((time, i) => {
                        const active = [9, 19, 31].includes(i)
                        const bold = i === 31
                        const marked = active || i === 0
                        return (
                            <tr key={time}>
                                <NameCell $indent="36px" $active={active} $bold={bold}>
                                    <NodeLabel $inset={marked ? '0' : '10px'}>
                                        {marked && <Icon name="tick" />}
                                        Time = {time}
                                    </NodeLabel>
                                </NameCell>
                                <CountCell $active={active} />
                                <CountCell $active={active} $bold={bold}>{i + 1}</CountCell>
                            </tr>
                        )
                    })}
                </tbody>
            </TreeTable>
        </Tree>
        <SideActions>
            <FormButton type="button">Load All</FormButton>
            <FormButton type="button">Load Selected</FormButton>
        </SideActions>
    </Side>
)

const TimeRow = ({ label, value, position, action }) => (
    <>
        <span>{label}</span>
        <Frames>
            {['frameFirst', 'frameBack', 'frameNext', 'frameLast'].map((name) => (
                <Raised key={name} type="button" $small aria-label={name}><Icon name={name} /></Raised>
            ))}
        </Frames>
        <TextInput aria-label={label} defaultValue={value} />
        <Range type="range" aria-label={label} defaultValue={position} />
        <Raised type="button">{action}</Raised>
    </>
)

const App = () => {
    return (
        <>
            <GlobalStyle />
            <Slide>
                <PageNumber>47</PageNumber>
                <div>
                    <Title>与传统结果后处理方式效率对比</Title>
                    <Steps>
                        {steps.map(([name, color], i) => (
                            <Step key={name} $color={color} $first={i === 0}>{name}</Step>
                        ))}
                    </Steps>
                    <Window>
                        <TopBar>
                            <Tools $width="682px"><ToolList items={topTools} /></Tools>
                            <PageBox>
                                <ToolButton type="button" aria-label="Previous"><Icon name="prev" /></ToolButton>
                                <ToolButton type="button" aria-label="Next"><Icon name="next" /></ToolButton>
                                <label>
                                    <TextInput $width="16px" defaultValue="1" />
                                    of 1
                                </label>
                            </PageBox>
                        </TopBar>
                        <Body>
                            <SidePanel />
                            <Main>
                                <Stage>
                                    <Rail>
                                        <RailGrip />
                                        <ToolList items="m1 m2 m3 m4 m5 m6 monitor balls" />
                                        <RailGrip />
                                        <ToolList items="blue e1 e2 e3 e4 e5 m3" />
                                    </Rail>
                                    <Viewport>
                                        <Truck />
                                        <Caption>
                                            1: NCAP -45 load cell wall<br />
                                            Loadcase 1 : Time = 0.300001 : Frame 32
                                        </Caption>
                                    </Viewport>
                                </Stage>
                                <BottomBar>
                                    <Tools $width="485px">
                                        <ToolList items="| contour . | wheel colorCube" />
                                        <Component>
                                            <SelectBox>
                                                <Select aria-label="Colour mode"><option>By Comp</option></Select>
                                            </SelectBox>
                                        </Component>
                                        <ToolList items="wire . solid . blocks mirror greenBox | band strips vector tensor iso2 tap -columns -shape section note runner -jet -curve | track blob wave camera -graph | loop . first rewind play forward last" />
                                    </Tools>
                                    <Tools $width="74px">
                                        <Range type="range" $small aria-label="Speed" defaultValue="100" />
                                    </Tools>
                                    <ToolButton type="button" aria-label="Settings"><Icon name="gear" /></ToolButton>
                                </BottomBar>
                                <Player>
                                    <RateLabel>
                                        Max Frame Rate:<br />
                                        (Frames/Sec)
                                        <RateRow>
                                            <output>27</output>
                                            <RateRange type="range" defaultValue="27" />
                                        </RateRow>
                                    </RateLabel>
                                    <Controls>
                                        <TimeRow label="Current time:" value="0.300000578" position="100" action="Forward" />
                                        <TimeRow label="Animate start:" value="0" position="0" action="Time Scales..." />
                                        <TimeRow label="Animate end:" value="0.300000578" position="100" action="Frame Rate" />
                                        <span />
                                        <Raised type="button">Model Step</Raised>
                                        <span /><span /><span />
                                        <label htmlFor="increment">Increment by:</label>
                                        <SelectBox $tall $inset="6px">
                                            <Select id="increment"><option>Time</option></Select>
                                        </SelectBox>
                                        <TextInput type="number" aria-label="Increment" defaultValue="1" />
                                        <Extra>
                                            <Raised type="button">Default increment</Raised>
                                            <CheckLabel><Check type="checkbox" />Bounce</CheckLabel>
                                        </Extra>
                                    </Controls>
                                </Player>
                            </Main>
                        </Body>
                        <StatusBar>3 entities selected</StatusBar>
                    </Window>
                </div>
            </Slide>
        </>
    );
}

export default App;
